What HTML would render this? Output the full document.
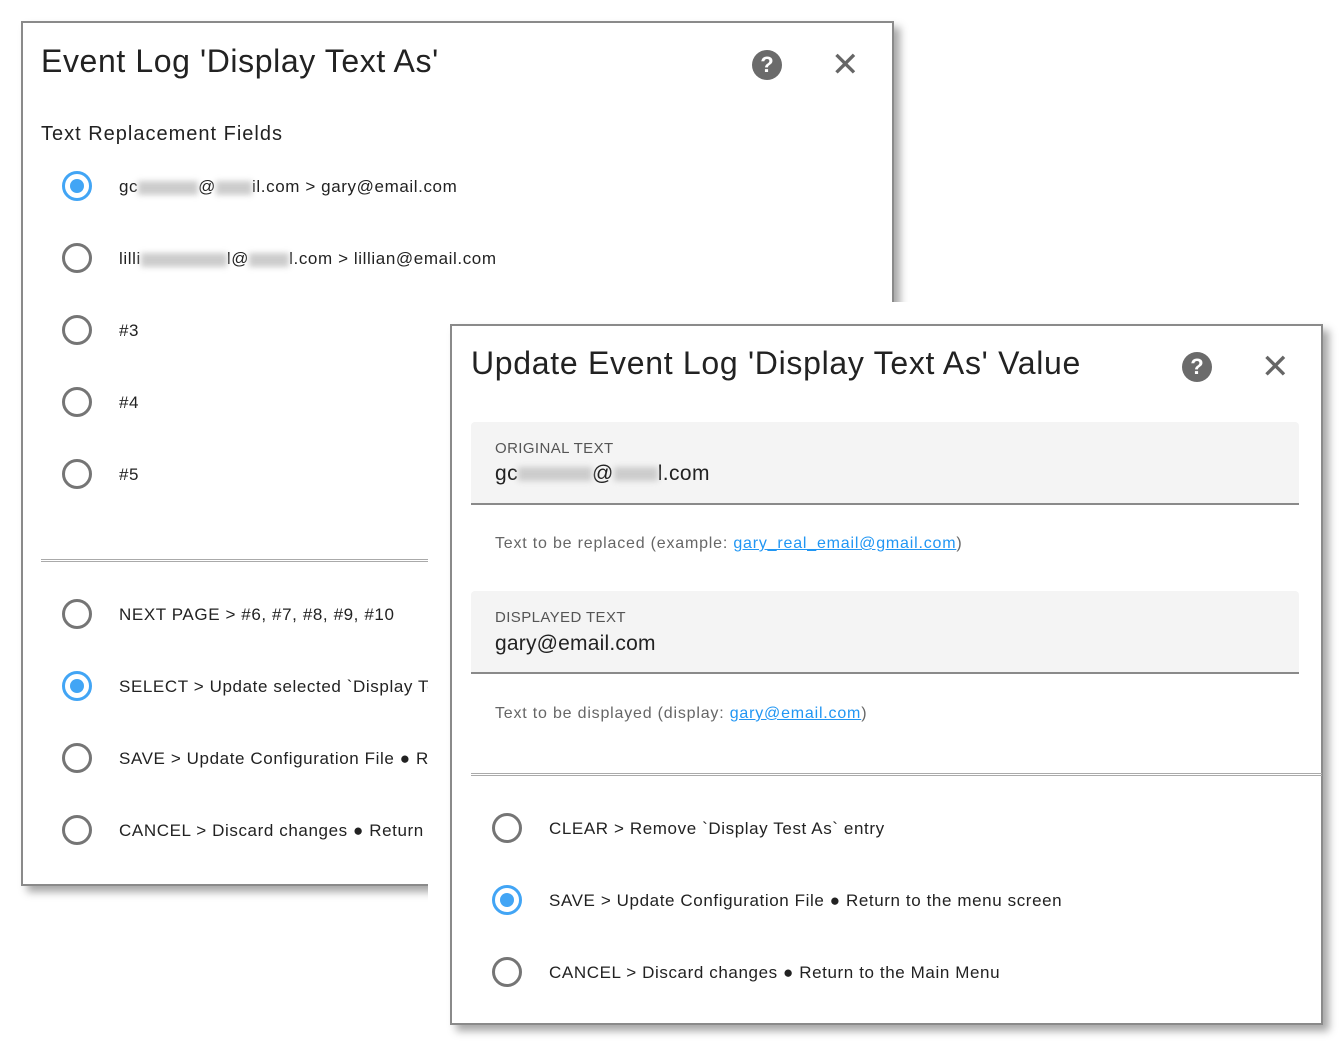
<!DOCTYPE html><html><head><style>
body{margin:0;width:1344px;height:1046px;background:#fff;position:relative;overflow:hidden;font-family:"Liberation Sans",sans-serif;color:#222}
.a{position:absolute}
.dlg{position:absolute;background:#fff;border:2px solid #8a8a8a;box-shadow:6px 6px 8px rgba(0,0,0,.35);box-sizing:border-box}
.r{position:absolute;width:30px;height:30px;border:3px solid #757575;border-radius:50%;box-sizing:border-box}
.r.on{border-color:#42a5f5}
.r.on::after{content:"";position:absolute;left:5px;top:5px;width:14px;height:14px;border-radius:50%;background:#42a5f5}
.t{position:absolute;font-size:17px;color:#222;white-space:nowrap;line-height:20px;letter-spacing:.6px}
.blur{display:inline-block;background:#ccc;filter:blur(3px);height:14px;vertical-align:middle}
.help{position:absolute;width:30px;height:30px;border-radius:50%;background:#6b6b6b;color:#fff;font-weight:bold;font-size:22px;text-align:center;line-height:30px}
.x{position:absolute;font-size:34px;color:#666;line-height:30px}
.div{position:absolute;height:0;border-top:3px double #aaa}
.fld{position:absolute;background:#f4f4f4;border-bottom:2px solid #8a8a8a;border-radius:4px 4px 0 0}
a{color:#2196f3;text-decoration:underline}
</style></head><body>
<div class="dlg" style="left:21px;top:21px;width:873px;height:865px"></div>
<div class="a" style="left:41px;top:43px;font-size:32px;color:#222;letter-spacing:.6px">Event Log 'Display Text As'</div>
<div class="help" style="left:752px;top:50px">?</div>
<div class="x" style="left:831px;top:50px">✕</div>
<div class="a" style="left:41px;top:123px;font-size:20px;letter-spacing:1px">Text Replacement Fields</div>
<div class="r on" style="left:62px;top:171px"></div><div class="t" style="left:119px;top:177px">gc<span class="blur" style="width:60px"></span>@<span class="blur" style="width:36px"></span>il.com &gt; gary@email.com</div>
<div class="r" style="left:62px;top:243px"></div><div class="t" style="left:119px;top:249px">lilli<span class="blur" style="width:86px"></span>l@<span class="blur" style="width:40px"></span>l.com &gt; lillian@email.com</div>
<div class="r" style="left:62px;top:315px"></div><div class="t" style="left:119px;top:321px">#3</div>
<div class="r" style="left:62px;top:387px"></div><div class="t" style="left:119px;top:393px">#4</div>
<div class="r" style="left:62px;top:459px"></div><div class="t" style="left:119px;top:465px">#5</div>
<div class="div" style="left:41px;top:559px;width:390px"></div>
<div class="r" style="left:62px;top:599px"></div><div class="t" style="left:119px;top:605px">NEXT PAGE &gt; #6, #7, #8, #9, #10</div>
<div class="r on" style="left:62px;top:671px"></div><div class="t" style="left:119px;top:677px">SELECT &gt; Update selected `Display Text As`</div>
<div class="r" style="left:62px;top:743px"></div><div class="t" style="left:119px;top:749px">SAVE &gt; Update Configuration File ● Return</div>
<div class="r" style="left:62px;top:815px"></div><div class="t" style="left:119px;top:821px">CANCEL &gt; Discard changes ● Return to</div>
<div class="a" style="left:428px;top:302px;width:916px;height:744px;background:#fff"></div>
<div class="dlg" style="left:450px;top:324px;width:873px;height:701px"></div>
<div class="a" style="left:471px;top:345px;font-size:32px;color:#222;letter-spacing:.7px">Update Event Log 'Display Text As' Value</div>
<div class="help" style="left:1182px;top:352px">?</div>
<div class="x" style="left:1261px;top:352px">✕</div>
<div class="fld" style="left:471px;top:422px;width:828px;height:81px"></div>
<div class="a" style="left:495px;top:440px;font-size:15px;color:#555;letter-spacing:.4px">ORIGINAL TEXT</div>
<div class="a" style="left:495px;top:462px;font-size:21px;letter-spacing:.4px">gc<span class="blur" style="width:74px"></span>@<span class="blur" style="width:44px"></span>l.com</div>
<div class="a" style="left:495px;top:535px;font-size:16px;color:#666;letter-spacing:.8px">Text to be replaced (example: <a>gary_real_email@gmail.com</a>)</div>
<div class="fld" style="left:471px;top:591px;width:828px;height:81px"></div>
<div class="a" style="left:495px;top:609px;font-size:15px;color:#555;letter-spacing:.4px">DISPLAYED TEXT</div>
<div class="a" style="left:495px;top:632px;font-size:21px;letter-spacing:.2px">gary@email.com</div>
<div class="a" style="left:495px;top:705px;font-size:16px;color:#666;letter-spacing:.8px">Text to be displayed (display: <a>gary@email.com</a>)</div>
<div class="div" style="left:471px;top:773px;width:851px"></div>
<div class="r" style="left:492px;top:813px"></div><div class="t" style="left:549px;top:819px">CLEAR &gt; Remove `Display Test As` entry</div>
<div class="r on" style="left:492px;top:885px"></div><div class="t" style="left:549px;top:891px">SAVE &gt; Update Configuration File ● Return to the menu screen</div>
<div class="r" style="left:492px;top:957px"></div><div class="t" style="left:549px;top:963px">CANCEL &gt; Discard changes ● Return to the Main Menu</div>
</body></html>
